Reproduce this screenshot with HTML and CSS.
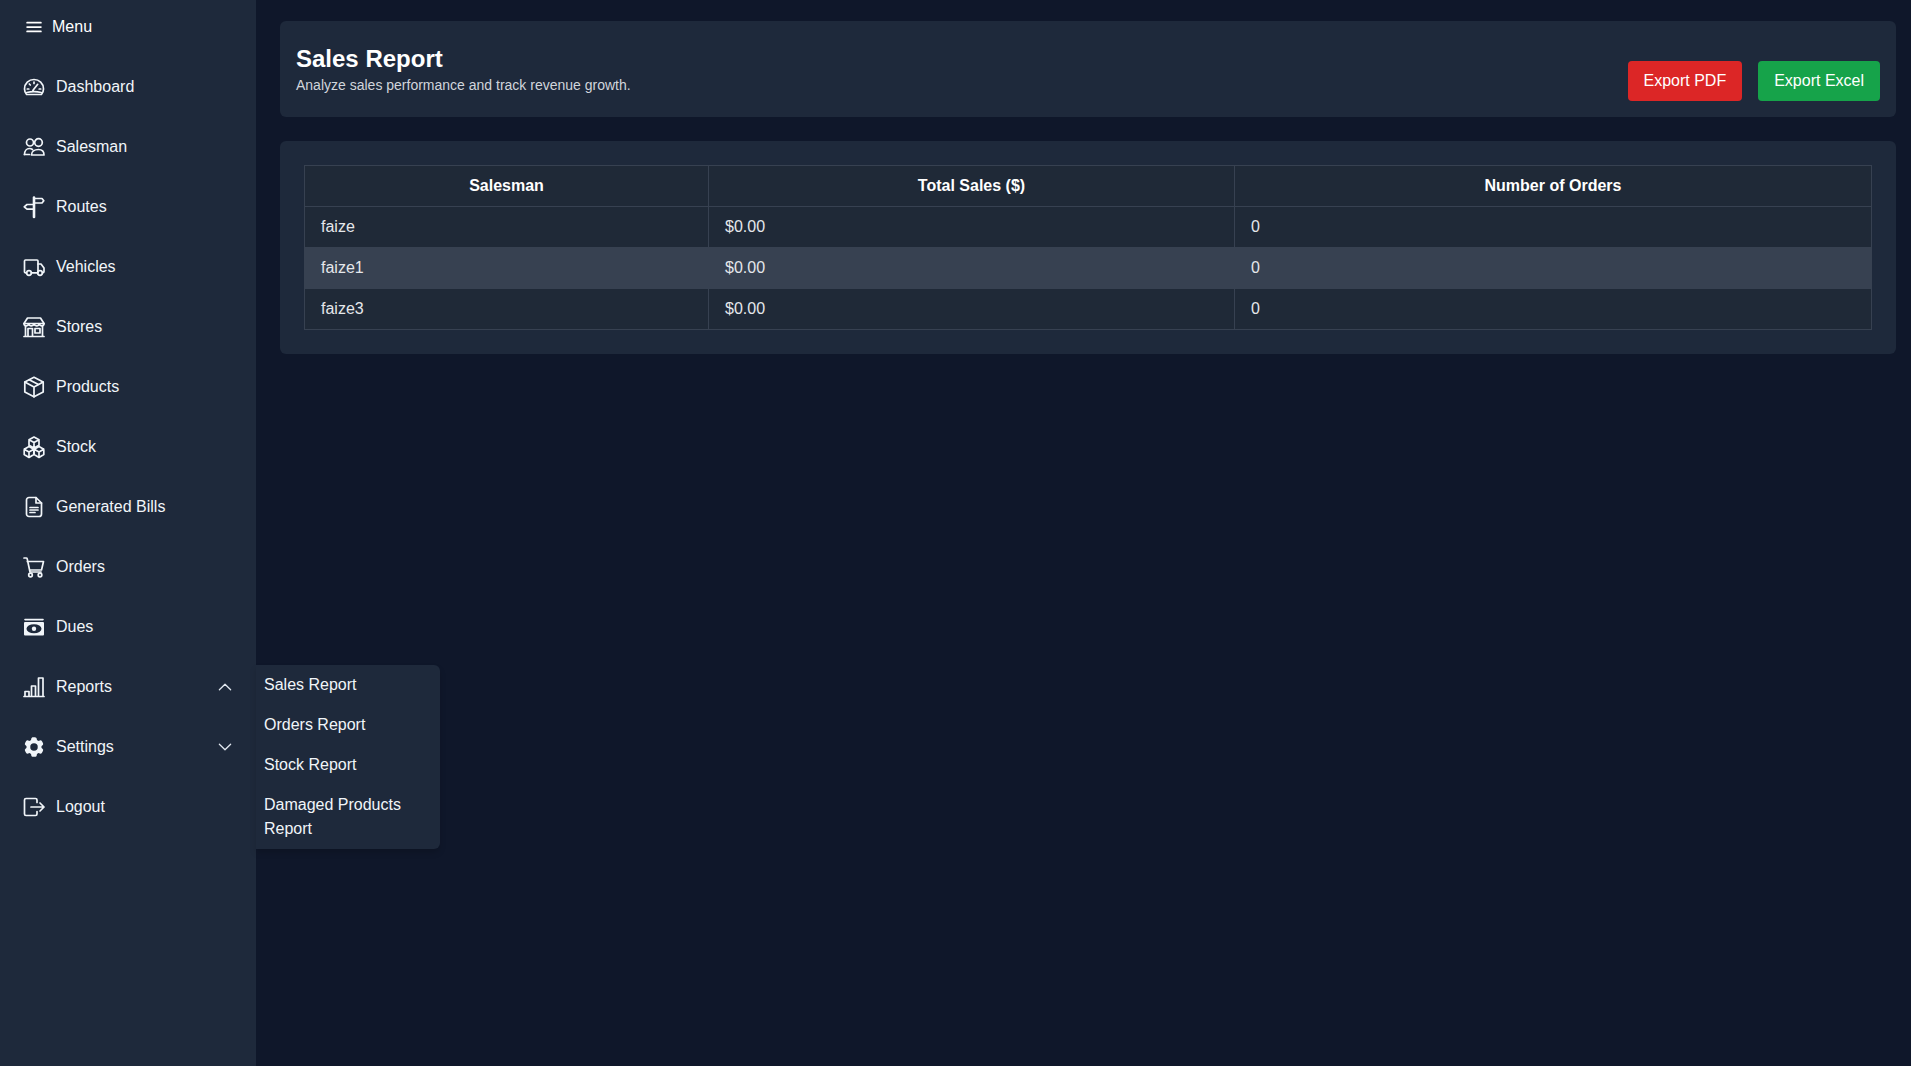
FILE: index.html
```html
<!DOCTYPE html>
<html lang="en">
<head>
<meta charset="utf-8">
<title>Sales Report</title>
<link rel="stylesheet" href="styles.css">
</head>
<body>
<aside class="sidebar">
  <div class="menu-toggle">
    <svg class="ico ico-sm" viewBox="0 0 24 24"><path d="M3.750 6.750h16.500M3.750 12h16.500M3.750 17.250h16.500"/></svg>
    <span>Menu</span>
  </div>
  <nav class="nav">
    <a class="nav-item"><svg class="ico" viewBox="0 0 24 24"><path d="M4.600 19.500h14.800c1.300-1.600 2.100-3.500 2.100-5.600C21.500 8.600 17.200 4.500 12 4.500S2.500 8.600 2.500 13.900c0 2.100.8 4 2.100 5.600z"/><path d="M12 7v1.500M7.300 9l1 1M5.300 14h1.500M17.200 14h1.500M11 15.300l4.700-6M4.800 17.500c4.500-1 9.900-1 14.400 0"/></svg><span>Dashboard</span></a>
    <a class="nav-item"><svg class="ico" viewBox="0 0 24 24"><circle cx="8" cy="7.500" r="3.500"/><circle cx="16.500" cy="7.500" r="3.800"/><path d="M2.500 19.500c0-3.500 2-6 5-6 1.200 0 2.200.4 3 1"/><path d="M9.500 20c0-3.500 3-5.500 7-5.500s5.500 2.500 5.500 5.500z"/><path d="M2.500 19.500h5"/></svg><span>Salesman</span></a>
    <a class="nav-item"><svg class="ico" viewBox="0 0 24 24"><path d="M12 2.500v19.500" stroke-width="2.600"/><path d="M12 3.500h8l1.800 2.200L20 8h-8M12 9.500H5l-2.800 2.300L5 14.200h7"/></svg><span>Routes</span></a>
    <a class="nav-item"><svg class="ico" viewBox="0 0 24 24"><path d="M4.500 17.800H3.500a1 1 0 0 1-1-1V6a1 1 0 0 1 1-1h11.500a1 1 0 0 1 1 1v11.800H9.500"/><path d="M16 9h3l3 4v3.500c0 .8-.5 1.300-1.300 1.300"/><circle cx="7" cy="18" r="2.300"/><circle cx="18" cy="18" r="2.300"/></svg><span>Vehicles</span></a>
    <a class="nav-item"><svg class="ico" viewBox="0 0 24 24"><path d="M5.500 3h13L22 8.500c0 1.200-1 2.300-2.300 2.300-1.200 0-2.200-.9-2.500-2-.2 1.100-1.300 2-2.600 2s-2.300-.9-2.600-2c-.3 1.100-1.300 2-2.600 2s-2.400-.9-2.600-2c-.3 1.100-1.300 2-2.500 2C3 10.800 2 9.700 2 8.500z"/><path d="M2 8.500h20M3.500 11v10M20.500 11v10M2 21.500h20"/><path d="M6 21v-7.500h4.500V21M13 13.500h5V18h-5z"/></svg><span>Stores</span></a>
    <a class="nav-item"><svg class="ico" viewBox="0 0 24 24"><path d="M12 2.300l9.200 4.800v10L12 21.800l-9.200-4.700v-10z"/><path d="M2.800 7.100l9.200 4.800 9.200-4.800M12 11.900v9.900M7.200 4.700l9.300 4.800"/></svg><span>Products</span></a>
    <a class="nav-item"><svg class="ico" viewBox="0 0 24 24"><path d="M12 2l5 2.800v5.400L12 13l-5-2.800V4.800zM7 4.800L12 7.600l5-2.800M12 7.600V13"/><path d="M7 11.500l4.800 2.700v5.400L7 22.400l-4.800-2.800v-5.400zM2.200 14.200L7 17l4.800-2.800M7 17v5.400"/><path d="M17 11.500l4.800 2.700v5.400L17 22.400l-4.800-2.800v-5.400zM12.200 14.200L17 17l4.800-2.800M17 17v5.400"/></svg><span>Stock</span></a>
    <a class="nav-item"><svg class="ico" viewBox="0 0 24 24"><path d="M14 2.500H7A2.500 2.500 0 0 0 4.500 5v14A2.500 2.500 0 0 0 7 21.500h10a2.500 2.500 0 0 0 2.500-2.500V8z"/><path d="M14 2.500V8h5.500M8 12.500h8M8 15h8M8 17.500h5"/></svg><span>Generated Bills</span></a>
    <a class="nav-item"><svg class="ico" viewBox="0 0 24 24"><path d="M2 3h2.200c.5 0 .9.300 1 .8L8 17h11M5.300 6.500H21.500l-2 8.500H7.500"/><circle cx="8.500" cy="20" r="1.800"/><circle cx="18" cy="20" r="1.800"/></svg><span>Orders</span></a>
    <a class="nav-item"><svg class="ico ico-bill" viewBox="0 0 24 24"><path class="bill-top" d="M3 4.600h18"/><rect class="bill-face" x="2" y="7" width="20" height="13.500" rx="1"/><ellipse class="bill-hole" cx="12" cy="13.700" rx="7.500" ry="4.500"/><circle class="bill-dot" cx="12" cy="13.700" r="2.200"/></svg><span>Dues</span></a>
    <div class="nav-item has-sub">
      <svg class="ico" viewBox="0 0 24 24"><path d="M2 21.500h20M3 21v-4.500h4V21M9.500 21V11h4v10M16.500 21V3h4.500v18"/></svg><span class="grow">Reports</span>
      <svg class="ico chevron" viewBox="0 0 24 24"><path d="M4.500 15.750l7.500-7.500 7.500 7.500"/></svg>
      <ul class="submenu">
        <li>Sales Report</li>
        <li>Orders Report</li>
        <li>Stock Report</li>
        <li>Damaged Products Report</li>
      </ul>
    </div>
    <div class="nav-item">
      <svg class="ico ico-solid" viewBox="0 0 24 24"><path fill-rule="evenodd" d="M11.078 2.250c-.917 0-1.699.663-1.850 1.567L9.050 4.889c-.020.120-.115.260-.297.348a7.493 7.493 0 00-.986.570c-.166.115-.334.126-.450.083L6.300 5.508a1.875 1.875 0 00-2.282.819l-.922 1.597a1.875 1.875 0 00.432 2.385l.840.692c.095.078.170.229.154.430a7.598 7.598 0 000 1.139c.015.200-.059.352-.153.430l-.841.692a1.875 1.875 0 00-.432 2.385l.922 1.597a1.875 1.875 0 002.282.818l1.019-.382c.115-.043.283-.031.450.082.312.214.641.405.985.570.182.088.277.228.297.350l.178 1.071c.151.904.933 1.567 1.850 1.567h1.844c.916 0 1.699-.663 1.850-1.567l.178-1.072c.020-.120.114-.260.297-.349.344-.165.673-.356.985-.570.167-.114.335-.125.450-.082l1.020.382a1.875 1.875 0 002.280-.819l.923-1.597a1.875 1.875 0 00-.432-2.385l-.840-.692c-.095-.078-.170-.229-.154-.430a7.614 7.614 0 000-1.139c-.016-.200.059-.352.153-.430l.840-.692c.708-.582.891-1.590.433-2.385l-.922-1.597a1.875 1.875 0 00-2.282-.818l-1.020.382c-.114.043-.282.031-.449-.083a7.490 7.490 0 00-.985-.570c-.183-.087-.277-.227-.297-.348l-.179-1.072a1.875 1.875 0 00-1.850-1.567h-1.843zM12 15.750a3.750 3.750 0 100-7.500 3.750 3.750 0 000 7.500z" clip-rule="evenodd"/></svg><span class="grow">Settings</span>
      <svg class="ico chevron" viewBox="0 0 24 24"><path d="M19.500 8.250l-7.500 7.500-7.500-7.500"/></svg>
    </div>
    <a class="nav-item"><svg class="ico" viewBox="0 0 24 24"><path d="M15 7.500V5a1.500 1.500 0 0 0-1.500-1.500H4A1.500 1.500 0 0 0 2.500 5v14A1.500 1.500 0 0 0 4 20.500h9.500A1.500 1.500 0 0 0 15 19v-2.500"/><path d="M9 12h13M18 8l4 4-4 4"/></svg><span>Logout</span></a>
  </nav>
</aside>
<main class="main">
  <header class="card page-header">
    <div class="titles">
      <h1>Sales Report</h1>
      <p>Analyze sales performance and track revenue growth.</p>
    </div>
    <div class="actions">
      <button class="btn btn-red" type="button">Export PDF</button>
      <button class="btn btn-green" type="button">Export Excel</button>
    </div>
  </header>
  <section class="card table-card">
    <table>
      <thead>
        <tr><th class="col-a">Salesman</th><th class="col-b">Total Sales ($)</th><th class="col-c">Number of Orders</th></tr>
      </thead>
      <tbody>
        <tr><td>faize</td><td>$0.00</td><td>0</td></tr>
        <tr class="hover"><td>faize1</td><td>$0.00</td><td>0</td></tr>
        <tr><td>faize3</td><td>$0.00</td><td>0</td></tr>
      </tbody>
    </table>
  </section>
</main>
</body>
</html>
```

FILE: styles.css
```css
* { box-sizing: border-box; }
html, body { height: 100%; }
body {
  margin: 0;
  display: flex;
  min-height: 100vh;
  overflow: hidden;
  background: #0f172a;
  color: #e5e7eb;
  font-family: "Liberation Sans", Arial, sans-serif;
  font-size: 16px;
  line-height: 24px;
}
.sidebar {
  width: 256px;
  flex: none;
  background: #1e293b;
  color: #f1f5f9;
}
.menu-toggle {
  height: 53px;
  display: flex;
  align-items: center;
  gap: 8px;
  padding-left: 24px;
  color: #fff;
}
.nav { margin-top: 4px; }
.nav-item {
  position: relative;
  height: 60px;
  display: flex;
  align-items: center;
  gap: 10px;
  padding: 0 22px 0 22px;
}
.grow { flex: 1; }
.ico {
  width: 24px;
  height: 24px;
  flex: none;
  fill: none;
  stroke: currentColor;
  stroke-width: 1.7;
  stroke-linecap: round;
  stroke-linejoin: round;
}
.ico-sm { width: 20px; height: 20px; stroke-width: 2.1; }
.ico-solid { fill: currentColor; stroke: none; }
.ico-bill { stroke: none; }
.bill-top { stroke: currentColor; stroke-width: 1.6; }
.bill-face { fill: currentColor; }
.bill-hole { fill: #1e293b; }
.bill-dot { fill: currentColor; }
.chevron {
  width: 18px;
  height: 18px;
  stroke-width: 1.7;
  color: #e2e8f0;
}
.submenu {
  position: absolute;
  left: 100%;
  top: 8px;
  z-index: 5;
  width: 184px;
  margin: 0;
  padding: 0;
  list-style: none;
  background: #1e293b;
  border-radius: 0 6px 6px 0;
  box-shadow: 0 4px 6px rgba(0, 0, 0, 0.15);
}
.submenu li { padding: 8px; }
.main {
  flex: 1;
  min-width: 0;
  padding: 21px 15px 0 24px;
  display: flex;
  flex-direction: column;
  gap: 24px;
}
.card {
  background: #1e293b;
  border-radius: 6px;
}
.page-header {
  min-height: 96px;
  padding: 16px;
  display: flex;
  justify-content: space-between;
}
.titles { align-self: center; }
.titles h1 {
  margin: 0;
  font-size: 24px;
  line-height: 32px;
  font-weight: 700;
  color: #fff;
}
.titles p {
  margin: 0;
  font-size: 14px;
  line-height: 20px;
  color: #d1d5db;
}
.actions {
  align-self: flex-end;
  display: flex;
  gap: 16px;
}
.btn {
  height: 40px;
  padding: 0 16px;
  border: 0;
  border-radius: 4px;
  color: #fff;
  font: inherit;
}
.btn-red { background: #dc2626; }
.btn-green { background: #16a34a; }
.table-card { padding: 24px; }
table {
  width: 100%;
  table-layout: fixed;
  border-collapse: collapse;
  background: #1f2937;
}
th, td {
  padding: 8px 16px;
  border: 1px solid #374151;
  text-align: left;
  font-weight: 400;
}
th {
  text-align: center;
  font-weight: 700;
  color: #fff;
}
.col-a { width: 404px; }
.col-b { width: 526px; }
.hover { background: #374151; }
```
